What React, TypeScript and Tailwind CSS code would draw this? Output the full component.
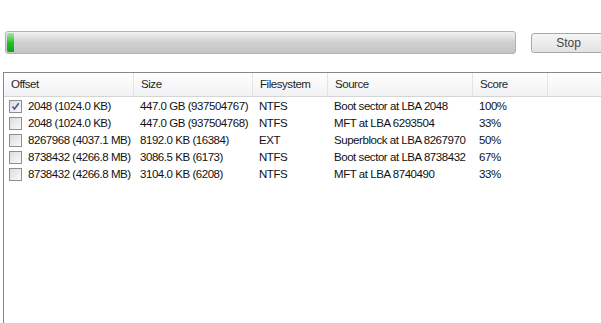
import React from "react";

const rows = [
  { checked: true, offset: "2048 (1024.0 KB)", size: "447.0 GB (937504767)", fs: "NTFS", source: "Boot sector at LBA 2048", score: "100%" },
  { checked: false, offset: "2048 (1024.0 KB)", size: "447.0 GB (937504768)", fs: "NTFS", source: "MFT at LBA 6293504", score: "33%" },
  { checked: false, offset: "8267968 (4037.1 MB)", size: "8192.0 KB (16384)", fs: "EXT", source: "Superblock at LBA 8267970", score: "50%" },
  { checked: false, offset: "8738432 (4266.8 MB)", size: "3086.5 KB (6173)", fs: "NTFS", source: "Boot sector at LBA 8738432", score: "67%" },
  { checked: false, offset: "8738432 (4266.8 MB)", size: "3104.0 KB (6208)", fs: "NTFS", source: "MFT at LBA 8740490", score: "33%" },
];

function Checkbox({ checked }: { checked: boolean }) {
  return (
    <div className="w-[13px] h-[13px] border border-[#8f8f8f] bg-gradient-to-br from-[#dcdcdc] to-[#fafafa] flex items-center justify-center shrink-0">
      {checked && (
        <svg width="9" height="9" viewBox="0 0 9 9">
          <path d="M1.5 4.5 L3.5 7 L7.8 1.2" fill="none" stroke="#3c5a9a" strokeWidth="1.6" />
        </svg>
      )}
    </div>
  );
}

const cols = ["w-[130px]", "w-[119px]", "w-[75px]", "w-[145px]", "w-[75px]"];

export default function App() {
  return (
    <div
      className="w-[601px] h-[323px] bg-white overflow-hidden text-[11.5px] tracking-[-0.45px] text-[#111] whitespace-nowrap"
      style={{ fontFamily: '"Liberation Sans", Arial, sans-serif' }}
    >
      <div className="flex items-center pt-[31px] pl-[5px] h-[54px] w-[700px]">
        <div className="w-[511px] h-[23px] shrink-0 rounded-[3px] border border-[#b2b2b2] bg-gradient-to-b from-[#f2f2f2] via-[#d0d0d0] to-[#c4c4c4] p-[1px] flex">
          <div className="w-[7px] h-full rounded-l-[2px] bg-gradient-to-b from-[#9be89b] via-[#22c12a] to-[#0fa21a]" />
        </div>
        <div className="ml-[15px] w-[75px] h-[20px] shrink-0 rounded-[3px] border border-[#a8a8a8] bg-gradient-to-b from-[#f6f6f6] to-[#e2e2e2] flex items-center justify-center text-[#444] text-[12px] tracking-normal">
          Stop
        </div>
      </div>
      <div className="ml-[3px] mt-[18px] w-[700px] h-[260px] border-l border-t border-[#828790]">
        <div className="flex h-[24px] bg-gradient-to-b from-white to-[#f1f2f4] border-b border-[#d5d5d5]">
          {["Offset", "Size", "Filesystem", "Source", "Score"].map((h, i) => (
            <div key={h} className={`${cols[i]} shrink-0 flex items-center pl-[7px] border-r border-[#e3e4e6] text-[#1e1e1e]`}>
              {h}
            </div>
          ))}
          <div className="flex-1" />
        </div>
        <div className="pt-[1px]">
          {rows.map((r, idx) => (
            <div key={idx} className="flex h-[17px] items-center">
              <div className={`${cols[0]} shrink-0 overflow-hidden flex items-center pl-[5px] gap-[6px]`}>
                <Checkbox checked={r.checked} />
                <span>{r.offset}</span>
              </div>
              <div className={`${cols[1]} shrink-0 overflow-hidden pl-[6px]`}>{r.size}</div>
              <div className={`${cols[2]} shrink-0 overflow-hidden pl-[6px]`}>{r.fs}</div>
              <div className={`${cols[3]} shrink-0 overflow-hidden pl-[6px]`}>{r.source}</div>
              <div className={`${cols[4]} shrink-0 overflow-hidden pl-[6px]`}>{r.score}</div>
            </div>
          ))}
        </div>
      </div>
    </div>
  );
}
